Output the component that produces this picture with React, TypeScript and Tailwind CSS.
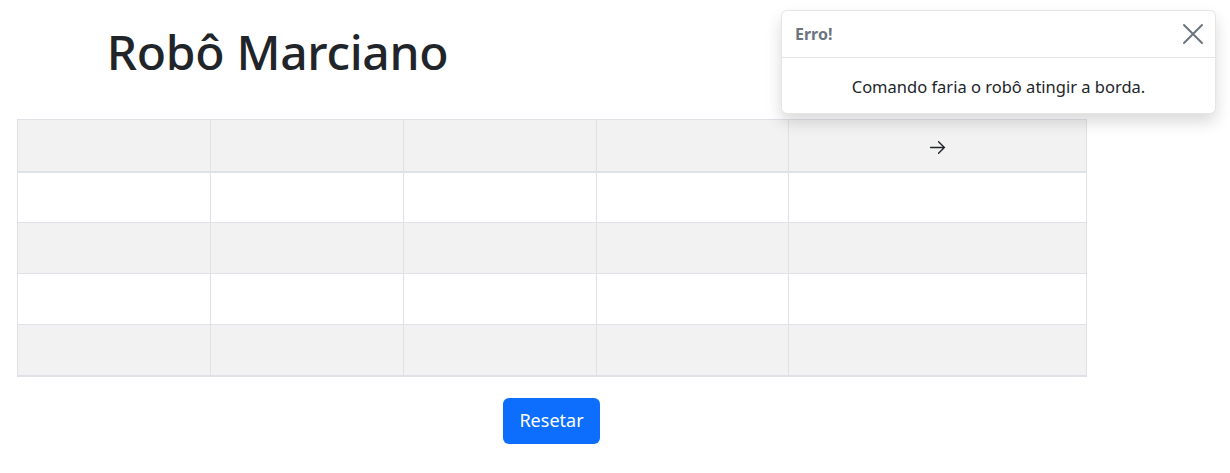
import React from 'react';

const rows = 5;
const cols = 5;

const App: React.FC = () => {
  return (
    <div className="relative w-[1230px] h-[473px] bg-white text-[#212529]" style={{ fontFamily: '"Noto Sans", "Open Sans", sans-serif' }}>
      {/* Title */}
      <div className="w-[555px] pt-[17px] h-[119px]">
        <h1 className="text-center text-[48px] font-medium leading-[70px] tracking-[-0.3px]">Robô Marciano</h1>
      </div>

      {/* Grid */}
      <div className="pl-[17px]">
        <table className="border-collapse w-[1069px] table-fixed">
          <colgroup>
            <col className="w-[193px]" />
            <col className="w-[193px]" />
            <col className="w-[193px]" />
            <col className="w-[192px]" />
            <col className="w-[298px]" />
          </colgroup>
          <tbody>
            {Array.from({ length: rows }).map((_, r) => (
              <tr
                key={r}
                className={`${r % 2 === 0 ? 'bg-[#f2f2f2]' : 'bg-white'} ${r === 0 ? 'h-[52px] border-b-2' : 'h-[51px]'} ${r === rows - 1 ? 'border-b-2' : ''} border-[#dee2e6]`}
              >
                {Array.from({ length: cols }).map((_, c) => (
                  <td key={c} className="border border-[#dee2e6] text-center align-middle p-0">
                    {r === 0 && c === 4 ? (
                      <svg width="17" height="17" viewBox="0 0 16 16" className="inline-block mt-[2px]" fill="none" stroke="#212529" strokeWidth="1.3" strokeLinecap="round">
                        <path d="M1.5 8h13M9 2.5L14.5 8 9 13.5" />
                      </svg>
                    ) : null}
                  </td>
                ))}
              </tr>
            ))}
          </tbody>
        </table>
      </div>

      {/* Reset button */}
      <div className="w-[1103px] flex justify-center pt-[21px]">
        <button className="w-[97px] h-[46px] bg-[#0d6efd] text-white rounded-[6px] text-[18px]">Resetar</button>
      </div>

      {/* Toast */}
      <div className="absolute top-[10px] left-[781px] w-[435px] bg-white rounded-[6px] border border-black/10 shadow-[0_8px_16px_rgba(0,0,0,0.15)]">
        <div className="h-[47px] flex items-center justify-between pl-[13px] pr-[10px] border-b border-black/10 text-[#6c757d]">
          <strong className="text-[16px] font-bold">Erro!</strong>
          <svg width="24" height="24" viewBox="0 0 24 24" stroke="#6c757d" strokeWidth="2" strokeLinecap="round">
            <path d="M3 3l18 18M21 3L3 21" />
          </svg>
        </div>
        <div className="h-[55px] flex items-center justify-center text-[16.5px] pt-[3px]">
          Comando faria o robô atingir a borda.
        </div>
      </div>
    </div>
  );
};

export default App;
